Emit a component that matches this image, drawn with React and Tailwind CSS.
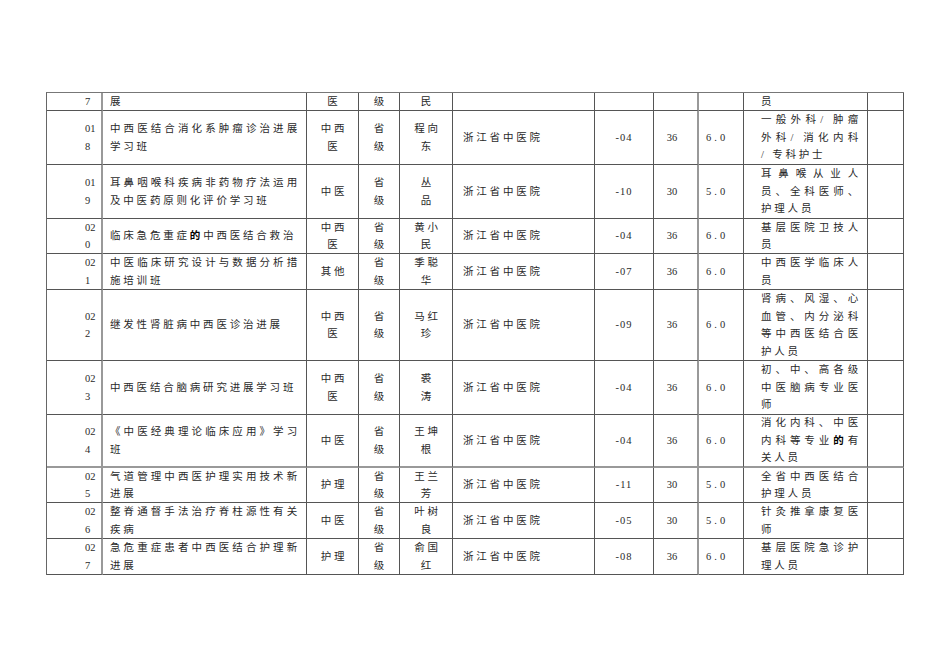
import React from 'react';

const ROWS = [
    { no: ['7'], name: ['展'], type: ['医'], level: ['级'], who: ['民'], org: '', month: '', hours: '', credit: '', target: ['员'] },
    { no: ['01', '8'], name: ['中西医结合消化系肿瘤诊治进展', '学习班'], type: ['中西', '医'], level: ['省', '级'], who: ['程向', '东'], org: '浙江省中医院', month: '-04', hours: '36', credit: '6.0', target: ['一般外科/ 肿瘤', '外科/ 消化内科', '/ 专科护士'] },
    { no: ['01', '9'], name: ['耳鼻咽喉科疾病非药物疗法运用', '及中医药原则化评价学习班'], type: ['中医'], level: ['省', '级'], who: ['丛', '品'], org: '浙江省中医院', month: '-10', hours: '30', credit: '5.0', target: ['耳鼻喉从业人', '员、全科医师、', '护理人员'] },
    { no: ['02', '0'], name: ['临床急危重症的中西医结合救治'], type: ['中西', '医'], level: ['省', '级'], who: ['黄小', '民'], org: '浙江省中医院', month: '-04', hours: '36', credit: '6.0', target: ['基层医院卫技人', '员'] },
    { no: ['02', '1'], name: ['中医临床研究设计与数据分析措', '施培训班'], type: ['其他'], level: ['省', '级'], who: ['季聪', '华'], org: '浙江省中医院', month: '-07', hours: '36', credit: '6.0', target: ['中西医学临床人', '员'] },
    { no: ['02', '2'], name: ['继发性肾脏病中西医诊治进展'], type: ['中西', '医'], level: ['省', '级'], who: ['马红', '珍'], org: '浙江省中医院', month: '-09', hours: '36', credit: '6.0', target: ['肾病、风湿、心', '血管、内分泌科', '等中西医结合医', '护人员'] },
    { no: ['02', '3'], name: ['中西医结合脑病研究进展学习班'], type: ['中西', '医'], level: ['省', '级'], who: ['裘', '涛'], org: '浙江省中医院', month: '-04', hours: '36', credit: '6.0', target: ['初、中、高各级', '中医脑病专业医', '师'] },
    { no: ['02', '4'], name: ['《中医经典理论临床应用》学习', '班'], type: ['中医'], level: ['省', '级'], who: ['王坤', '根'], org: '浙江省中医院', month: '-04', hours: '36', credit: '6.0', target: ['消化内科、中医', '内科等专业的有', '关人员'], soft: true },
    { no: ['02', '5'], name: ['气道管理中西医护理实用技术新', '进展'], type: ['护理'], level: ['省', '级'], who: ['王兰', '芳'], org: '浙江省中医院', month: '-11', hours: '30', credit: '5.0', target: ['全省中西医结合', '护理人员'] },
    { no: ['02', '6'], name: ['整脊通督手法治疗脊柱源性有关', '疾病'], type: ['中医'], level: ['省', '级'], who: ['叶树', '良'], org: '浙江省中医院', month: '-05', hours: '30', credit: '5.0', target: ['针灸推拿康复医', '师'] },
    { no: ['02', '7'], name: ['急危重症患者中西医结合护理新', '进展'], type: ['护理'], level: ['省', '级'], who: ['俞国', '红'], org: '浙江省中医院', month: '-08', hours: '36', credit: '6.0', target: ['基层医院急诊护', '理人员'] },
];

// the "的" in the scan comes out in a heavier fallback glyph
const Txt = ({ s }) => {
    const parts = s.split('的');
    return parts.map((p, i) => (
        <React.Fragment key={i}>
            {p}
            {i < parts.length - 1 && <span className="font-bold text-black">的</span>}
        </React.Fragment>
    ));
};

const Lines = ({ lines, justify }) => (
    <>
        {lines.map((l, i) => (
            <div
                key={i}
                className={
                    justify && i < lines.length - 1
                        ? 'whitespace-nowrap text-justify [text-align-last:justify]'
                        : 'whitespace-nowrap'
                }
            >
                <Txt s={l} />
            </div>
        ))}
    </>
);

export default function App() {
    return (
        <div className="min-h-[672px] w-[950px] bg-white pl-[46px] pt-[92px] text-[#2a2a2a] font-['Liberation_Serif','Noto_Sans_CJK_SC',serif]">
            <div className="grid w-[858px] grid-cols-[56px_204px_52px_41px_53px_142px_59px_45px_45px_124px_36px] grid-rows-[18px_54px_54px_35px_36px_71px_54px_53px_35px_36px_36px] border-l border-t border-l-[#666] border-t-[#777] text-[10.5px] leading-[17.5px]">
                {ROWS.map((r, i) => {
                    const cell = `flex min-w-0 flex-col justify-center border-r border-r-[#555] ${
                        r.soft ? 'border-b-2 border-b-[#999]' : 'border-b border-b-[#555]'
                    }`;
                    return (
                        <React.Fragment key={i}>
                            <div className={`${cell} border-r-2 border-r-[#999] pl-[38px]`}>
                                <Lines lines={r.no} />
                            </div>
                            <div className={`${cell} pl-[7px] pr-[6px] tracking-[2.8px]`}>
                                <Lines lines={r.name} justify />
                            </div>
                            <div className={`${cell} pl-[3px] text-center tracking-[2.8px]`}>
                                <Lines lines={r.type} />
                            </div>
                            <div className={`${cell} pl-[3px] text-center tracking-[2.8px]`}>
                                <Lines lines={r.level} />
                            </div>
                            <div className={`${cell} pl-[3px] text-center tracking-[2.8px]`}>
                                <Lines lines={r.who} />
                            </div>
                            <div className={`${cell} pl-[10px] tracking-[2.8px]`}>{r.org}</div>
                            <div className={`${cell} text-center tracking-[1px]`}>{r.month}</div>
                            <div className={`${cell} border-r-2 border-r-[#999] pr-[7px] text-center`}>{r.hours}</div>
                            <div className={`${cell} pl-[7px] tracking-[3px]`}>{r.credit}</div>
                            <div className={`${cell} pl-[17px] pr-[6px] tracking-[2.8px]`}>
                                <Lines lines={r.target} justify />
                            </div>
                            <div className={cell}></div>
                        </React.Fragment>
                    );
                })}
            </div>
        </div>
    );
}
